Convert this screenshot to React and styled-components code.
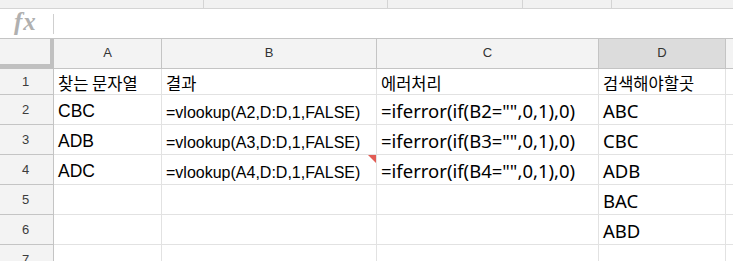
import React from 'react'
import styled, { createGlobalStyle } from 'styled-components'

const GlobalStyle = createGlobalStyle`
  html, body {
    margin: 0;
    padding: 0;
    background: #ffffff;
    overflow: hidden;
  }
  * {
    box-sizing: border-box;
  }
`

const columns = [
  { key: 'A', width: 108 },
  { key: 'B', width: 215 },
  { key: 'C', width: 222 },
  { key: 'D', width: 127, selected: true },
  { key: 'E', width: 60 }
]

const rows = [
  { n: 1, height: 26, cells: ['찾는 문자열', '결과', '에러처리', '검색해야할곳', ''], kind: 'ko' },
  { n: 2, height: 30, cells: ['CBC', '=vlookup(A2,D:D,1,FALSE)', '=iferror(if(B2="",0,1),0)', 'ABC', ''] },
  { n: 3, height: 30, cells: ['ADB', '=vlookup(A3,D:D,1,FALSE)', '=iferror(if(B3="",0,1),0)', 'CBC', ''] },
  { n: 4, height: 30, cells: ['ADC', '=vlookup(A4,D:D,1,FALSE)', '=iferror(if(B4="",0,1),0)', 'ADB', ''], flagged: 1 },
  { n: 5, height: 30, cells: ['', '', '', 'BAC', ''] },
  { n: 6, height: 30, cells: ['', '', '', 'ABD', ''] },
  { n: 7, height: 30, cells: ['', '', '', '', ''] }
]

const dataFonts = ['arial', 'arialSmall', 'noto', 'noto', 'noto']

const App = () => {
  return (
    <>
      <GlobalStyle />
      <SheetStyled>
        <ToolStripStyled>
          <StripSegment $width={204} />
          <StripSegment $width={184} />
          <StripSegment $width={135} />
          <StripSegment $width={89} />
          <StripSegment $width={121} $last />
        </ToolStripStyled>
        <FormulaBarStyled>
          <FxStyled>fx</FxStyled>
          <FormulaDivider />
        </FormulaBarStyled>
        <GridStyled>
          <HeaderRow>
            <CornerCell />
            {columns.map((col) => (
              <ColHeader key={col.key} $width={col.width} $selected={col.selected}>
                {col.key === 'E' ? '' : col.key}
              </ColHeader>
            ))}
          </HeaderRow>
          {rows.map((row) => (
            <RowStyled key={row.n} $height={row.height}>
              <RowHeader>{row.n}</RowHeader>
              {row.cells.map((text, i) => (
                <Cell
                  key={i}
                  $width={columns[i].width}
                  $font={row.kind === 'ko' ? 'ko' : dataFonts[i]}
                >
                  {text}
                  {row.flagged === i && <ErrorFlag />}
                </Cell>
              ))}
            </RowStyled>
          ))}
        </GridStyled>
      </SheetStyled>
    </>
  )
}

export default App

// STYLING
const SheetStyled = styled.div`
  width: 733px;
  height: 261px;
  overflow: hidden;
  font-family: 'Liberation Sans', Arial, sans-serif;
  background: #ffffff;
`

const ToolStripStyled = styled.div`
  display: flex;
  height: 9px;
  background: #f1f1f1;
  border-bottom: 1px solid #d4d4d4;
`

const StripSegment = styled.div`
  flex: 0 0 ${(p) => p.$width}px;
  border-right: ${(p) => (p.$last ? 'none' : '1px solid #d4d4d4')};
`

const FormulaBarStyled = styled.div`
  display: flex;
  align-items: center;
  height: 30px;
  border-bottom: 1px solid #c4c4c4;
  background: #ffffff;
`

const FxStyled = styled.div`
  width: 53px;
  padding-left: 14px;
  font-family: 'Liberation Serif', 'Times New Roman', serif;
  font-style: italic;
  font-weight: bold;
  font-size: 25px;
  color: #b0b0b0;
  letter-spacing: 1px;
  line-height: 1;
  margin-top: -4px;
`

const FormulaDivider = styled.div`
  width: 1px;
  height: 20px;
  background: #cfcfcf;
`

const GridStyled = styled.div`
  display: flex;
  flex-direction: column;
`

const HeaderRow = styled.div`
  display: flex;
  height: 30px;
`

const CornerCell = styled.div`
  flex: 0 0 54px;
  background: #f3f3f3;
  border-right: 4px solid #c0c0c0;
  border-bottom: 5px solid #c0c0c0;
`

const ColHeader = styled.div`
  flex: 0 0 ${(p) => p.$width}px;
  display: flex;
  align-items: center;
  justify-content: center;
  background: ${(p) => (p.$selected ? '#dcdcdc' : '#f3f3f3')};
  border-right: 1px solid #c4c4c4;
  border-bottom: 1px solid #c4c4c4;
  font-size: 13px;
  color: #333333;
  padding-bottom: 2px;
`

const RowStyled = styled.div`
  display: flex;
  height: ${(p) => p.$height}px;
`

const RowHeader = styled.div`
  flex: 0 0 54px;
  display: flex;
  align-items: center;
  justify-content: center;
  background: #f3f3f3;
  border-right: 1px solid #c4c4c4;
  border-bottom: 1px solid #c4c4c4;
  font-size: 13px;
  color: #3c3c3c;
  padding-right: 2px;
`

const fontStyles = {
  ko: `
    font-family: 'Noto Sans CJK KR', 'Noto Sans', sans-serif;
    font-size: 16.5px;
    line-height: 20px;
    padding-bottom: 1px;
  `,
  arial: `
    font-family: 'Liberation Sans', Arial, sans-serif;
    font-size: 17.5px;
    line-height: 20px;
    padding-bottom: 3px;
  `,
  arialSmall: `
    font-family: 'Liberation Sans', Arial, sans-serif;
    font-size: 16px;
    line-height: 19px;
    padding-bottom: 2px;
  `,
  noto: `
    font-family: 'Noto Sans', 'Noto Sans CJK KR', sans-serif;
    font-size: 18.5px;
    line-height: 22px;
    padding-bottom: 2px;
  `
}

const Cell = styled.div`
  position: relative;
  flex: 0 0 ${(p) => p.$width}px;
  display: flex;
  align-items: flex-end;
  padding-left: 4px;
  border-right: 1px solid #e2e2e2;
  border-bottom: 1px solid #e2e2e2;
  color: #000000;
  white-space: nowrap;
  overflow: visible;
  ${(p) => fontStyles[p.$font]}
`

const ErrorFlag = styled.span`
  position: absolute;
  top: 0;
  right: 0;
  width: 0;
  height: 0;
  border-top: 8px solid #e25c55;
  border-left: 8px solid transparent;
`
